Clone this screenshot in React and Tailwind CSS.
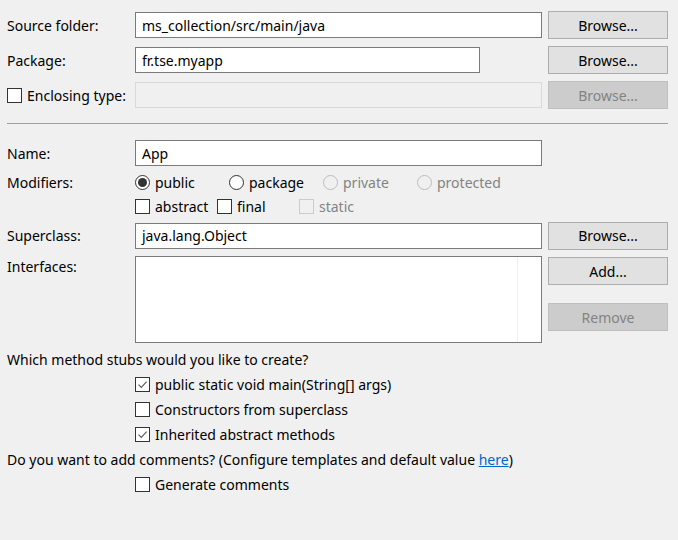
import React from 'react';

const font = { fontFamily: '"Noto Sans", "Open Sans", sans-serif' };

function Btn({ children, disabled }) {
  return (
    <div
      className={`w-[120px] h-[28px] shrink-0 flex items-center justify-center border text-[14px] ${
        disabled ? 'bg-[#cccccc] border-[#bfbfbf] text-[#838383]' : 'bg-[#e1e1e1] border-[#adadad] text-black'
      }`}
    >
      {children}
    </div>
  );
}

function Input({ value, w = 'w-[407px]', disabled }) {
  return (
    <div
      className={`${w} h-[26px] shrink-0 flex items-center px-[6px] border text-[14px] ${
        disabled ? 'bg-[#f0f0f0] border-[#d9d9d9]' : 'bg-white border-[#7a7a7a]'
      }`}
    >
      {value}
    </div>
  );
}

function Check({ checked, disabled }) {
  return (
    <div
      className={`w-[15px] h-[15px] shrink-0 border flex items-center justify-center ${
        disabled ? 'border-[#cccccc] bg-[#f0f0f0]' : 'border-[#333333] bg-white'
      }`}
    >
      {checked && (
        <svg width="11" height="11" viewBox="0 0 11 11">
          <path d="M1.5 5.7 L4.3 8.4 L9.6 2.6" fill="none" stroke="#5a5a5a" strokeWidth="1.1" />
        </svg>
      )}
    </div>
  );
}

function Radio({ checked, disabled }) {
  return (
    <div
      className={`w-[15px] h-[15px] shrink-0 rounded-full border flex items-center justify-center ${
        disabled ? 'border-[#bcbcbc] bg-[#f0f0f0]' : 'border-[#333333] bg-white'
      }`}
    >
      {checked && <div className="w-[9px] h-[9px] rounded-full bg-[#333333]" />}
    </div>
  );
}

function Label({ children }) {
  return <div className="w-[128px] shrink-0 text-[14px]">{children}</div>;
}

export default function App() {
  return (
    <div className="w-[678px] h-[540px] bg-[#f0f0f0] text-black pl-[7px] pr-[10px] overflow-hidden" style={font}>
      <div className="pt-[11px]" />
      <div className="flex items-center h-[28px]">
        <Label>Source folder:</Label>
        <Input value="ms_collection/src/main/java" />
        <div className="ml-[6px]"><Btn>Browse...</Btn></div>
      </div>
      <div className="flex items-center h-[28px] mt-[7px]">
        <Label>Package:</Label>
        <Input value="fr.tse.myapp" w="w-[345px]" />
        <div className="ml-[68px]"><Btn>Browse...</Btn></div>
      </div>
      <div className="flex items-center h-[28px] mt-[7px]">
        <div className="w-[128px] shrink-0 flex items-center gap-[5px] text-[14px]">
          <Check />
          <span>Enclosing type:</span>
        </div>
        <Input value="" disabled />
        <div className="ml-[6px]"><Btn disabled>Browse...</Btn></div>
      </div>

      <div className="mt-[14px] h-px bg-[#a0a0a0]" />

      <div className="flex items-center h-[26px] mt-[16px]">
        <Label>Name:</Label>
        <Input value="App" />
      </div>
      <div className="flex items-center h-[18px] mt-[7px] text-[14px]">
        <Label>Modifiers:</Label>
        <div className="flex items-center gap-[5px] w-[94px]">
          <Radio checked />
          <span>public</span>
        </div>
        <div className="flex items-center gap-[5px] w-[94px]">
          <Radio />
          <span>package</span>
        </div>
        <div className="flex items-center gap-[5px] w-[94px] text-[#838383]">
          <Radio disabled />
          <span>private</span>
        </div>
        <div className="flex items-center gap-[5px] text-[#838383]">
          <Radio disabled />
          <span>protected</span>
        </div>
      </div>
      <div className="flex items-center h-[18px] mt-[6px] text-[14px]">
        <div className="w-[128px] shrink-0" />
        <div className="flex items-center gap-[5px] w-[82px]">
          <Check />
          <span>abstract</span>
        </div>
        <div className="flex items-center gap-[5px] w-[82px]">
          <Check />
          <span>final</span>
        </div>
        <div className="flex items-center gap-[5px] text-[#838383]">
          <Check disabled />
          <span>static</span>
        </div>
      </div>
      <div className="flex items-center h-[27px] mt-[7px]">
        <Label>Superclass:</Label>
        <Input value="java.lang.Object" />
        <div className="ml-[6px]"><Btn>Browse...</Btn></div>
      </div>
      <div className="flex items-start mt-[7px]">
        <div className="w-[128px] shrink-0 text-[14px] leading-[22px]">Interfaces:</div>
        <div className="w-[407px] h-[87px] shrink-0 bg-white border border-[#7a7a7a] flex justify-end">
          <div className="w-px h-full bg-[#e5f1fb] mr-[23px]" />
        </div>
        <div className="ml-[6px] flex flex-col gap-[18px] pt-px">
          <Btn>Add...</Btn>
          <Btn disabled>Remove</Btn>
        </div>
      </div>

      <div className="mt-[4px] text-[14px]">
        <div className="h-[25px] flex items-center">Which method stubs would you like to create?</div>
        <div className="h-[25px] flex items-center gap-[5px] pl-[128px]">
          <Check checked />
          <span>public static void main(String[] args)</span>
        </div>
        <div className="h-[25px] flex items-center gap-[5px] pl-[128px]">
          <Check />
          <span>Constructors from superclass</span>
        </div>
        <div className="h-[25px] flex items-center gap-[5px] pl-[128px]">
          <Check checked />
          <span>Inherited abstract methods</span>
        </div>
        <div className="h-[25px] flex items-center">
          <span>
            Do you want to add comments? (Configure templates and default value{' '}
            <span className="text-[#0066cc] underline">here</span>)
          </span>
        </div>
        <div className="h-[25px] flex items-center gap-[5px] pl-[128px]">
          <Check />
          <span>Generate comments</span>
        </div>
      </div>
    </div>
  );
}
